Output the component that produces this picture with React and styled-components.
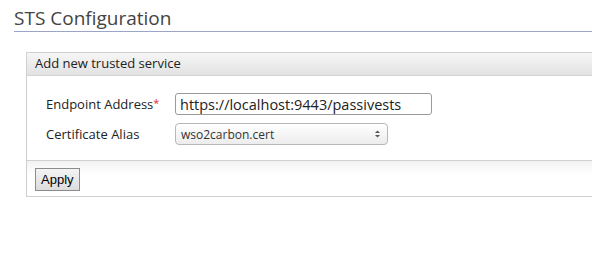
import React from "react";
import styled, { createGlobalStyle } from "styled-components";

const GlobalStyle = createGlobalStyle`
  body {
    margin: 0;
    background: #ffffff;
    font-family: "Open Sans", "DejaVu Sans", sans-serif;
    color: #222;
  }
`;

const Page = styled.div`
  width: 592px;
  height: 277px;
  overflow: hidden;
  padding: 6px 0 0 14px;
  box-sizing: border-box;
`;

const Title = styled.h2`
  margin: 0;
  font-size: 19px;
  font-weight: 400;
  line-height: 24px;
  color: #444;
  padding-bottom: 1px;
  border-bottom: 1px solid #9aa5c8;
`;

const Panel = styled.div`
  margin: 20px 0 0 12px;
  border: 1px solid #cfcfcf;
  border-right: none;
`;

const PanelHeader = styled.div`
  height: 22px;
  line-height: 21px;
  padding-left: 8px;
  font-size: 13px;
  color: #222;
  background: linear-gradient(#f6f6f6, #e2e2e2);
  border-bottom: 1px solid #d4d4d4;
`;

const Form = styled.div`
  display: grid;
  grid-template-columns: 129px auto;
  row-gap: 8px;
  align-items: center;
  padding: 17px 0 15px 19px;
  border-bottom: 1px solid #d0d0d0;
`;

const Label = styled.label`
  font-size: 13px;
  color: #222;
`;

const Required = styled.span`
  color: #e03030;
  font-size: 11px;
  vertical-align: 2px;
`;

const TextInput = styled.input`
  width: 257px;
  height: 22px;
  box-sizing: border-box;
  border: 1px solid #9a9a9a;
  border-radius: 3px;
  padding: 0 4px;
  font-family: "Open Sans", "DejaVu Sans", sans-serif;
  font-size: 14.5px;
  color: #222;
  outline: none;
`;

const SelectBox = styled.div`
  display: flex;
  align-items: center;
  justify-content: space-between;
  width: 213px;
  height: 22px;
  box-sizing: border-box;
  border: 1px solid #b8b8b8;
  border-radius: 4px;
  padding: 0 6px 0 5px;
  font-size: 12px;
  color: #333;
  background: linear-gradient(#ffffff, #ececec);
`;

const Footer = styled.div`
  padding: 6px 8px 5px;
  background: linear-gradient(#f2f2f2, #ffffff 40%);
`;

const Button = styled.button`
  font-family: "Liberation Sans", Arial, sans-serif;
  font-size: 13px;
  color: #000;
  height: 23px;
  padding: 0 5px;
  border: 1px solid #8c8c8c;
  background: linear-gradient(#f4f4f4, #dcdcdc);
`;

const Arrows = () => (
  <svg width="7" height="10" viewBox="0 0 7 10">
    <path d="M1 4 L3.5 1.5 L6 4 Z" fill="#555" />
    <path d="M1 6 L3.5 8.5 L6 6 Z" fill="#555" />
  </svg>
);

export default function App() {
  return (
    <>
      <GlobalStyle />
      <Page>
        <Title>STS Configuration</Title>
        <Panel>
          <PanelHeader>Add new trusted service</PanelHeader>
          <Form>
            <Label>
              Endpoint Address<Required>*</Required>
            </Label>
            <TextInput defaultValue="https://localhost:9443/passivests" />
            <Label>Certificate Alias</Label>
            <SelectBox>
              <span>wso2carbon.cert</span>
              <Arrows />
            </SelectBox>
          </Form>
          <Footer>
            <Button>Apply</Button>
          </Footer>
        </Panel>
      </Page>
    </>
  );
}
